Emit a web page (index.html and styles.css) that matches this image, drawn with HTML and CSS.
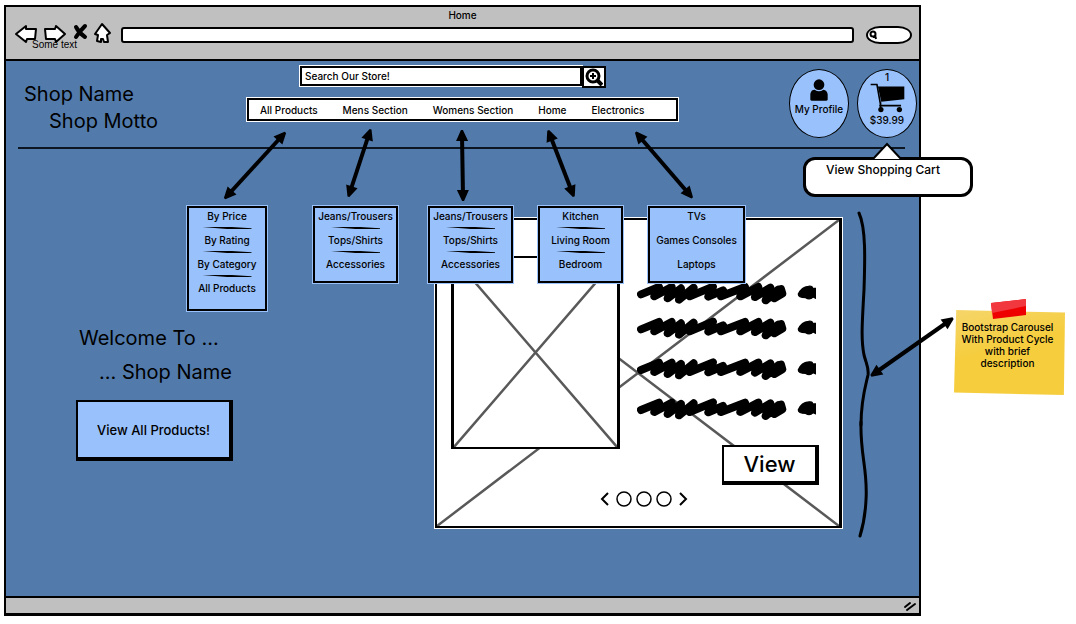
FILE: index.html
```html
<!DOCTYPE html>
<html lang="en">
<head>
<meta charset="utf-8">
<title>Home</title>
<link rel="stylesheet" href="styles.css">
</head>
<body>
<div class="board">
  <div class="browser">
    <div class="chrome">
      <div class="chrome-title">Home</div>
      <div class="toolbar">
        <button class="tool" aria-label="Back"><svg width="22" height="20" viewBox="0 0 22 20"><path d="M1 9 11 1 11 4 21 4 20 14 12 14 11 17Z"/></svg></button>
        <button class="tool" aria-label="Forward"><svg width="22" height="20" viewBox="0 0 22 20"><path d="M21 9 12 1 11 4 1 4 2 14 11 14 12 17Z"/></svg></button>
        <button class="tool" aria-label="Stop"><svg width="14" height="20" viewBox="0 0 14 20"><path class="cross" d="M3 2Q6 8 12 12M12 1Q6 7 3 12"/></svg></button>
        <button class="tool" aria-label="Home page"><svg width="17" height="20" viewBox="0 0 17 20"><path d="M8 -1 16 8 13 10 14 17 10 17 9 14 7 14 7 17 3 16 4 10 1 9Z"/></svg></button>
        <span class="tool-caption">Some text</span>
        <input class="address" type="text" aria-label="Address">
        <label class="quick">
          <svg width="9" height="10" viewBox="0 0 9 10"><circle cx="4" cy="4" r="2.5"/><path d="M6 5 7 9M4 7H7"/></svg>
          <input type="text" aria-label="Quick search">
        </label>
      </div>
    </div>

    <div class="page">
      <header class="header">
        <div class="brand">
          <div>Shop Name</div>
          <div class="motto">Shop Motto</div>
        </div>
        <div class="center">
          <form class="search">
            <input type="text" value="Search Our Store!" aria-label="Search our store">
            <button type="button" aria-label="Search"><svg width="18" height="18" viewBox="0 0 18 18"><circle cx="8" cy="8" r="6"/><path class="plus" d="M8 5V11M5 8H11"/><path class="handle" d="M12 12 17 17"/></svg></button>
          </form>
          <nav class="nav">
            <a href="#">All Products</a>
            <a href="#">Mens Section</a>
            <a href="#">Womens Section</a>
            <a href="#">Home</a>
            <a href="#">Electronics</a>
          </nav>
        </div>
        <div class="account">
          <a class="disc profile" href="#">
            <svg width="18" height="22" viewBox="0 0 54 66"><circle cx="27" cy="17" r="16"/><path d="M1 62V45Q3 32 14 32Q27 41 40 32Q52 34 53 46V62Q52 65 48 65H6Q2 65 1 62Z"/></svg>
            <span>My Profile</span>
          </a>
          <a class="disc cart" href="#">
            <span>1</span>
            <svg width="35" height="30" viewBox="0 0 106 90"><path d="M24 10H104V49L34 56Z"/><path class="frame" d="M2 4H21L32 66M28 68H94M32 58V76"/><circle cx="33" cy="80" r="8"/><circle cx="89" cy="80" r="8"/></svg>
            <span class="price">$39.99</span>
            <span class="callout"><svg width="30" height="18" viewBox="0 0 30 18"><path d="M1 17 15 2 29 17"/></svg>View Shopping Cart</span>
          </a>
        </div>
      </header>

      <div class="menus">
        <ul class="menu menu-all">
          <li>By Price</li><li>By Rating</li><li>By Category</li><li>All Products</li>
        </ul>
        <ul class="menu menu-mens">
          <li>Jeans/Trousers</li><li>Tops/Shirts</li><li>Accessories</li>
        </ul>
        <ul class="menu">
          <li>Jeans/Trousers</li><li>Tops/Shirts</li><li>Accessories</li>
        </ul>
        <ul class="menu">
          <li>Kitchen</li><li>Living Room</li><li>Bedroom</li>
        </ul>
        <ul class="menu menu-tech">
          <li>TVs</li><li>Games Consoles</li><li>Laptops</li>
        </ul>
      </div>

      <main class="main">
        <section class="hero">
          <div>Welcome To ...</div>
          <div class="hero-name">... Shop Name</div>
          <button class="all-products">View All Products!</button>
        </section>
        <section class="carousel">
          <svg class="cross-lines" viewBox="0 0 100 100" preserveAspectRatio="none"><path d="M0 0 100 100M100 0 0 100"/></svg>
          <div class="slide">
            <div class="photo"><svg class="cross-lines" viewBox="0 0 100 100" preserveAspectRatio="none"><path d="M0 0 100 100M100 0 0 100"/></svg></div>
            <div class="details">
              <svg class="scribbles" width="179" height="140" viewBox="0 0 537 420">
                <defs>
                  <g id="line">
                    <path d="M12 40 66 18 52 46 104 18 92 52 132 22 126 56 170 20 158 46 228 17 214 47 258 28 252 46 324 18 310 46 364 18 354 48 400 20 386 58 424 26 412 52 436 38 432 24 398 50"/>
                    <path class="blot" d="M484 39Q494 18 514 16Q528 14 526 22L537 22V52L528 48Q518 58 506 50Q484 50 484 39Z"/>
                  </g>
                </defs>
                <use href="#line"/>
                <use href="#line" y="105"/>
                <use href="#line" y="227"/>
                <use href="#line" y="347"/>
              </svg>
              <button class="view">View</button>
            </div>
          </div>
          <div class="pager">
            <button aria-label="Previous"><svg width="12" height="16" viewBox="0 0 12 16"><path class="chev" d="M8 2 2 8 8 14"/></svg></button>
            <button aria-label="Slide 1"><svg width="16" height="16" viewBox="0 0 16 16"><circle cx="8" cy="8" r="7"/></svg></button>
            <button aria-label="Slide 2"><svg width="16" height="16" viewBox="0 0 16 16"><circle cx="8" cy="8" r="7"/></svg></button>
            <button aria-label="Slide 3"><svg width="16" height="16" viewBox="0 0 16 16"><circle cx="8" cy="8" r="7"/></svg></button>
            <button aria-label="Next"><svg width="12" height="16" viewBox="0 0 12 16"><path class="chev" d="M4 2 10 8 4 14"/></svg></button>
          </div>
        </section>
        <svg class="brace" width="16" height="328" viewBox="0 0 16 328"><path class="upper" d="M3 3C10 18 9 50 8 80C6 115 5 130 8 145C11 156 13 158 12 165C9 178 5 190 5 215"/><path class="lower" d="M5 212C4 245 12 260 10 290Q9 310 4 326"/></svg>
      </main>
    </div>

    <footer class="status"><svg width="14" height="12" viewBox="0 0 14 12"><path d="M2 7 7 3M4 10 12 4"/></svg></footer>
  </div>

  <aside class="notes">
    <div class="note">
      <svg class="tape" width="36" height="21" viewBox="0 0 36 21"><path class="tape-body" d="M0 5 35 1 35 17 2 21Z"/><path class="tape-shine" d="M0 5 35 1 35 8 1 15Z"/></svg>
      <p>Bootstrap Carousel<br>With Product Cycle<br>with brief<br>description</p>
    </div>
  </aside>

  <svg class="arrows" width="1076" height="619" viewBox="0 0 1076 619">
    <defs>
      <marker id="head" markerUnits="userSpaceOnUse" markerWidth="14" markerHeight="14" refX="7" refY="7" orient="auto-start-reverse"><path d="M1 1 12 6 12 8 1 13Z"/></marker>
    </defs>
    <path class="arrow" d="M228 195 282 136"/>
    <path class="arrow" d="M350 192 369 134"/>
    <path class="arrow" d="M462 135 463 196"/>
    <path class="arrow" d="M550 135 572 192"/>
    <path class="arrow" d="M639 136 689 194"/>
    <path class="arrow" d="M875 373 949 321"/>
  </svg>
</div>
</body>
</html>
```
FILE: styles.css
```css
* { box-sizing: border-box; }

body {
  margin: 0;
  background: #fff;
  color: #000;
  font: 500 10px/16px Inter, "Liberation Sans", sans-serif;
}

a { color: inherit; text-decoration: none; }

button, input {
  margin: 0;
  padding: 0;
  border: 0;
  background: none;
  color: inherit;
  font: inherit;
}

svg {
  display: block;
  flex: none;
}

.board {
  position: relative;
  display: grid;
  grid-template-columns: minmax(0, 1fr) 155px;
  align-items: start;
  padding: 5px 0;
}

.browser {
  margin-left: 4px;
  border: 2px solid #000;
  border-bottom-width: 3px;
}

/* Browser chrome */
.chrome {
  padding-bottom: 12px;
  border-bottom: 2px solid #000;
  background: #c0c0c0;
}

.chrome-title { text-align: center; }

.toolbar {
  position: relative;
  display: flex;
  align-items: center;
  gap: 7px;
  height: 24px;
  padding: 0 7px 0 9px;
}

.tool svg {
  overflow: visible;
  fill: #fff;
  stroke: #000;
  stroke-width: 2;
  stroke-linejoin: round;
}

.tool .cross {
  fill: none;
  stroke-width: 4;
  stroke-linecap: round;
}

.tool-caption {
  position: absolute;
  left: 26px;
  top: 14px;
  font: 10px/16px "Liberation Sans", Arial, sans-serif;
}

.address {
  flex: 1;
  min-width: 0;
  height: 16px;
  margin: 0 5px 0 3px;
  border: 2px solid #000;
  border-radius: 3px;
  background: #fff;
}

.quick {
  display: flex;
  align-items: center;
  width: 46px;
  height: 18px;
  padding-left: 1px;
  border: 2px solid #000;
  border-radius: 14px / 9px;
  background: #fff;
}

.quick input {
  width: 24px;
  height: 12px;
}

.quick svg {
  fill: none;
  stroke: #000;
  stroke-width: 2;
}

/* Shop page */
.page {
  position: relative;
  background: #527bac;
}

.header {
  display: flex;
  align-items: flex-start;
  height: 88px;
  padding-right: 2px;
}

.header::after {
  content: "";
  position: absolute;
  top: 86px;
  left: 12px;
  right: 14px;
  height: 2px;
  background: #0c1522;
}

.brand {
  width: 241px;
  padding: 20px 0 0 18px;
  font-size: 20px;
  font-weight: 400;
  line-height: 27px;
}

.motto { padding-left: 25px; }

.center { width: 431px; padding-top: 5px; }

.search {
  display: flex;
  align-items: flex-start;
  margin: 0 72px 0 53px;
}

.search input {
  flex: 1;
  min-width: 0;
  height: 20px;
  padding-left: 3px;
  border: 2px solid #000;
  outline: 1px solid #fff;
  background: #fff;
}

.search button {
  display: grid;
  place-items: center;
  width: 24px;
  height: 22px;
  border: 2px solid #000;
  background: #fff;
}

.search svg {
  fill: none;
  stroke: #000;
  stroke-width: 3;
}

.search .plus { stroke-width: 2; }
.search .handle { stroke-width: 4; }

.nav {
  display: flex;
  align-items: center;
  gap: 25px;
  height: 23px;
  margin-top: 10px;
  padding-left: 11px;
  border: 2px solid #000;
  outline: 1px solid #fff;
  background: #fff;
  white-space: nowrap;
}

.account {
  display: flex;
  gap: 8px;
  margin-left: auto;
  padding-top: 8px;
}

.disc {
  position: relative;
  display: flex;
  flex-direction: column;
  align-items: center;
  width: 60px;
  height: 69px;
  border: 1px solid #000;
  border-radius: 50%;
  background: #99c1fb;
  line-height: 12px;
  white-space: nowrap;
}

.profile { gap: 2px; padding-top: 9px; }
.cart { padding-top: 1px; }
.cart .price { margin-top: 1px; }
.cart .frame { fill: none; stroke: #000; stroke-width: 5; }

.callout {
  position: absolute;
  z-index: 3;
  top: 87px;
  right: -57px;
  width: 170px;
  height: 40px;
  padding: 2px 10px 0 0;
  border: 3px solid #000;
  border-radius: 12px;
  background: #fff;
  font-size: 12px;
  line-height: 16px;
  text-align: center;
}

.callout svg {
  position: absolute;
  top: -18px;
  left: 66px;
  fill: #fff;
  stroke: #000;
  stroke-width: 2;
}

.menus {
  position: absolute;
  z-index: 1;
  top: 145px;
  left: 181px;
  display: flex;
  align-items: flex-start;
  gap: 25px;
}

.menu {
  width: 85px;
  margin: 0;
  padding: 0 0 9px;
  border: 2px solid #000;
  outline: 1px solid #99c1fb;
  background: #99c1fb;
  list-style: none;
  text-align: center;
  white-space: nowrap;
}

.menu-all { width: 80px; margin-right: 21px; padding-bottom: 13px; }
.menu-mens { margin-right: 5px; }
.menu-tech { width: 97px; }

.menu li:not(:last-child)::after {
  content: "";
  display: block;
  width: 49px;
  height: 2px;
  margin: 3px auto;
  background: #000;
  clip-path: polygon(0 0, 60% 0, 100% 60%, 100% 100%, 50% 100%);
}

.menu-tech li:not(:last-child)::after { background: none; }

.main {
  display: grid;
  grid-template-columns: minmax(0, 429fr) minmax(0, 407fr) 77px;
  align-items: start;
  padding: 69px 0 58px;
}

.hero {
  padding: 103px 0 0 70px;
  font-size: 20px;
  font-weight: 400;
  line-height: 34px;
}

.hero div { padding-left: 3px; }
.hero .hero-name { padding-left: 23px; }

.all-products {
  display: block;
  width: 157px;
  height: 61px;
  margin-top: 11px;
  border: solid #000;
  border-width: 2px 4px 4px 2px;
  background: #99c1fb;
  font-size: 13px;
  font-weight: 500;
}

.carousel {
  position: relative;
  height: 310px;
  padding: 36px 20px 0 14px;
  border: solid #000;
  border-width: 2px 3px 2px 2px;
  outline: 1px solid #fff;
  background: #fff;
}

.cross-lines {
  position: absolute;
  inset: 0;
  width: 100%;
  height: 100%;
}

.cross-lines path {
  fill: none;
  stroke: #595959;
  stroke-width: 2.5;
  vector-effect: non-scaling-stroke;
}

.slide {
  position: relative;
  display: flex;
  gap: 17px;
}

.photo {
  position: relative;
  width: 169px;
  height: 193px;
  border: 2px solid #000;
  border-right-width: 3px;
  border-left-width: 3px;
  background: #fff;
}

.details {
  flex: 1;
  padding-top: 25px;
}

.scribbles {
  fill: none;
  stroke: #000;
  stroke-width: 24;
  stroke-linecap: round;
  stroke-linejoin: round;
}

.scribbles .blot { fill: #000; stroke-width: 4; }

.view {
  display: block;
  width: 97px;
  height: 40px;
  margin: 24px 0 0 auto;
  border: solid #000;
  border-width: 2px 4px 4px 2px;
  background: #fff;
  font-size: 22px;
  font-weight: 500;
}

.pager {
  position: relative;
  display: flex;
  justify-content: center;
  gap: 4px;
  margin-top: 6px;
  padding-left: 18px;
}

.pager svg {
  fill: #fff;
  stroke: #000;
  stroke-width: 1.5;
}

.pager .chev { fill: none; stroke-width: 2; }

.brace {
  margin: -8px 0 0 14px;
  fill: none;
  stroke: #000;
  stroke-width: 3;
  stroke-linecap: round;
}

.status {
  display: flex;
  justify-content: flex-end;
  align-items: center;
  height: 17px;
  padding-right: 2px;
  border-top: 2px solid #000;
  background: #c0c0c0;
}

.status svg {
  fill: none;
  stroke: #000;
  stroke-width: 2;
  stroke-linecap: round;
}

/* Annotations */
.notes { padding: 305px 11px 0 33px; }

.note {
  position: relative;
  min-height: 85px;
  padding: 11px 4px 0 0;
}

.note::before {
  content: "";
  position: absolute;
  inset: 0;
  background: linear-gradient(165deg, #f6d66b, #f5cd3d 45%);
  clip-path: polygon(2% 0, 100% 3%, 99% 100%, 0 97%);
}

.note p {
  position: relative;
  margin: 0;
  line-height: 12px;
  text-align: center;
}

.tape {
  position: absolute;
  top: -12px;
  left: 37px;
}

.tape-body { fill: #ee0000; }
.tape-shine { fill: #f1383e; }

.arrows {
  position: absolute;
  z-index: 2;
  top: 0;
  left: 0;
  pointer-events: none;
}

.arrow {
  fill: none;
  stroke: #000;
  stroke-width: 4;
  marker-start: url(#head);
  marker-end: url(#head);
}
```
